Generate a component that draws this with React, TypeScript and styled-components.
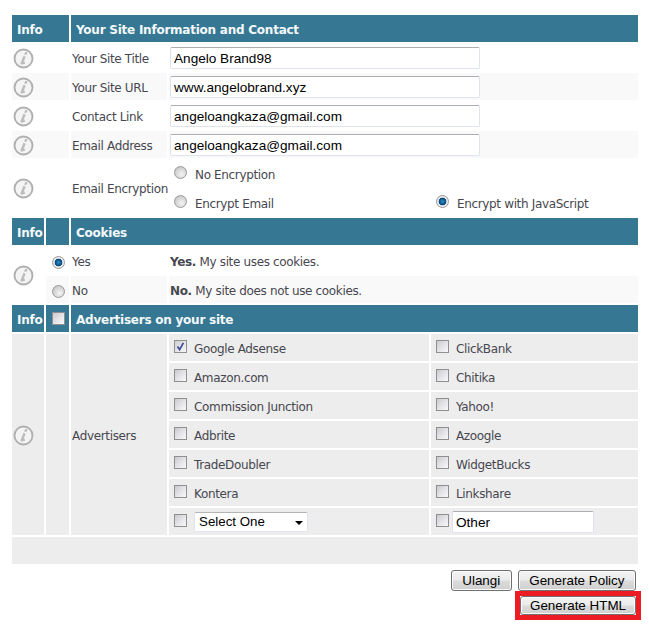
import React from "react";
import styled, { createGlobalStyle } from "styled-components";

const Global = createGlobalStyle`
  html, body { margin: 0; padding: 0; background: #fff; }
  body { font-family: "DejaVu Sans", Verdana, sans-serif; }
`;

const Page = styled.form`
  width: 649px;
  min-height: 624px;
  padding: 13px 0 0 10px;
  box-sizing: border-box;
`;

const FormTable = styled.table`
  width: 630px;
  table-layout: fixed;
  border-collapse: separate;
  border-spacing: 2px;
`;

const HeadCell = styled.th`
  box-sizing: border-box;
  height: 27px;
  padding: 3px 0 0 5px;
  background: #367893;
  color: #f4f8fa;
  font: bold 12px/24px "DejaVu Sans", Verdana, sans-serif;
  letter-spacing: -0.24px;
  text-align: left;
  white-space: nowrap;
  overflow: hidden;
`;

const HeadCheckCell = styled(HeadCell)`
  padding: 2px 0 0 6px;
  line-height: 0;
`;

const Cell = styled.td<{ $tone?: "white" | "alt" | "grey"; $pad?: number }>`
  height: 27px;
  padding: 0 0 0 ${(p) => p.$pad ?? 1}px;
  background: ${(p) => (p.$tone === "alt" ? "#f9f9f9" : p.$tone === "grey" ? "#ededed" : "#fff")};
  color: #47474f;
  font-size: 12px;
  letter-spacing: -0.35px;
  white-space: nowrap;
  vertical-align: middle;
`;

const InfoSvg = styled.svg`
  display: block;
  width: 21px;
  height: 21px;
`;

const InfoCellInner = styled.div`
  padding: 1px 0 0 0;
`;

const InfoIcon = () => (
  <InfoCellInner>
    <InfoSvg viewBox="0 0 21 21">
      <circle cx="10.5" cy="10.5" r="9" fill="#f4f4f4" stroke="#b0b0b0" strokeWidth="1.9" />
      <path d="M11.6 8.2 L8.7 15.4 L11.8 14.6" fill="none" stroke="#bdbdbd" strokeWidth="2.5" strokeLinejoin="round" />
      <path d="M12.1 3.9 L14.6 3.9 L13.6 6.8 L11.1 6.8 Z" fill="#bdbdbd" />
    </InfoSvg>
  </InfoCellInner>
);

const TextInput = styled.input<{ $width: number }>`
  display: block;
  box-sizing: border-box;
  width: ${(p) => p.$width}px;
  height: 22px;
  padding: 2px 3px 0;
  border: 1px solid #dfe3ec;
  border-top-color: #abadb3;
  border-left-color: #dfe3e9;
  border-radius: 2px;
  background: #fff;
  color: #000;
  font: 13.6px "Liberation Sans", Arial, sans-serif;
  outline: none;
`;

const Radio = styled.input.attrs({ type: "radio" })`
  appearance: none;
  display: block;
  flex: none;
  width: 13px;
  height: 13px;
  margin: 0 0 3px;
  border: 1px solid #9a9a9a;
  border-radius: 50%;
  background: radial-gradient(circle at 60% 65%, #f4f4f4, #c4c4c4 85%);
  box-sizing: border-box;
  &:checked {
    background: radial-gradient(circle at 50% 50%, #2a93c8 0, #0b4f86 38%, #0b4f86 46%, #f0f0f0 54%, #d8d8d8 100%);
  }
`;

const CookieRadio = styled(Radio)`
  margin: 4px 0 0;
`;

const Check = styled.input.attrs({ type: "checkbox" })`
  appearance: none;
  flex: none;
  display: inline-block;
  width: 13px;
  height: 13px;
  margin: 0 0 3px;
  border: 1px solid #8e8f8f;
  box-sizing: border-box;
  background: linear-gradient(135deg, #c9c9cf 0%, #e6e6ea 55%, #f8f8f8 100%);
  &:checked {
    background:
      url("data:image/svg+xml,%3Csvg xmlns='http://www.w3.org/2000/svg' viewBox='0 0 11 11'%3E%3Cpath d='M2.5 5.5 L4.6 8.6 L8.4 1.8' fill='none' stroke='%233d4d9c' stroke-width='1.7'/%3E%3C/svg%3E") center/100% no-repeat,
      linear-gradient(135deg, #cfcfd4 0%, #f8f8f8 100%);
  }
`;

const Choice = styled.label<{ $gap?: number }>`
  display: flex;
  align-items: center;
  gap: ${(p) => p.$gap ?? 7}px;
`;

const Caption = styled.span`
  display: block;
  padding-top: 2px;
`;

const Bold = styled.b`
  font-weight: bold;
`;

const SelectBox = styled.select`
  appearance: none;
  box-sizing: border-box;
  width: 114px;
  height: 20px;
  border: 1px solid #e2e3ea;
  border-top-color: #b5b5b5;
  border-radius: 2px;
  background: #fff;
  color: #000;
  padding: 0 0 0 4px;
  font: 13.3px "Liberation Sans", Arial, sans-serif;
`;

const SelectWrap = styled.span`
  position: relative;
  display: block;
  line-height: 0;
  &::after {
    content: "";
    position: absolute;
    right: 5px;
    top: 9px;
    border: 4px solid transparent;
    border-top: 4px solid #000;
    border-bottom: 0;
    pointer-events: none;
  }
`;

const Actions = styled.div`
  width: 626px;
  padding: 4px 0 0 0;
  display: flex;
  flex-direction: column;
  align-items: flex-end;
`;

const ActionRow = styled.div`
  display: flex;
  gap: 6px;
`;

const Button = styled.button`
  box-sizing: border-box;
  height: 21px;
  padding: 0 10.5px;
  border: 1px solid #707070;
  border-radius: 3px;
  background: linear-gradient(#f3f3f3 0%, #ebebeb 48%, #dcdcdc 52%, #cfcfcf 100%);
  box-shadow: inset 0 0 0 1px #fafafa;
  color: #000;
  font: 13.4px "Liberation Sans", Arial, sans-serif;
  white-space: nowrap;
`;

const HighlightFrame = styled.div`
  margin-right: -5px;
  border: 5px solid #ed1c24;
  line-height: 0;
`;

const MarkedButton = styled(Button)`
  display: block;
  width: 116px;
  height: 19px;
  padding: 0;
`;

const left = ["Google Adsense", "Amazon.com", "Commission Junction", "Adbrite", "TradeDoubler", "Kontera"];
const right = ["ClickBank", "Chitika", "Yahoo!", "Azoogle", "WidgetBucks", "Linkshare"];
const contact: [string, string][] = [
  ["Your Site Title", "Angelo Brand98"],
  ["Your Site URL", "www.angelobrand.xyz"],
  ["Contact Link", "angeloangkaza@gmail.com"],
  ["Email Address", "angeloangkaza@gmail.com"],
];

export default function App() {
  return (
    <Page onSubmit={(e) => e.preventDefault()}>
      <Global />
      <FormTable>
        <colgroup>
          <col style={{ width: 32 }} />
          <col style={{ width: 23 }} />
          <col style={{ width: 96 }} />
          <col style={{ width: 260 }} />
          <col style={{ width: 207 }} />
        </colgroup>
        <tbody>
          <tr>
            <HeadCell colSpan={2}>Info</HeadCell>
            <HeadCell colSpan={3}>Your Site Information and Contact</HeadCell>
          </tr>
          {contact.map(([label, value], i) => {
            const tone = i % 2 ? "alt" : "white";
            return (
              <tr key={label}>
                <Cell colSpan={2} $tone={tone}><InfoIcon /></Cell>
                <Cell $tone={tone}><Caption>{label}</Caption></Cell>
                <Cell colSpan={2} $tone={tone}><TextInput $width={310} defaultValue={value} /></Cell>
              </tr>
            );
          })}
          <tr>
            <Cell colSpan={2} rowSpan={2}><InfoIcon /></Cell>
            <Cell rowSpan={2}><Caption>Email Encryption</Caption></Cell>
            <Cell colSpan={2} $pad={5}><Choice $gap={8}><Radio name="enc" /><Caption>No Encryption</Caption></Choice></Cell>
          </tr>
          <tr>
            <Cell $pad={5}><Choice $gap={8}><Radio name="enc" /><Caption>Encrypt Email</Caption></Choice></Cell>
            <Cell $pad={5}><Choice $gap={8}><Radio name="enc" defaultChecked /><Caption>Encrypt with JavaScript</Caption></Choice></Cell>
          </tr>
          <tr>
            <HeadCell>Info</HeadCell>
            <HeadCell />
            <HeadCell colSpan={3}>Cookies</HeadCell>
          </tr>
          <tr>
            <Cell rowSpan={2}><InfoIcon /></Cell>
            <Cell $pad={6}><CookieRadio name="ck" defaultChecked /></Cell>
            <Cell><Caption>Yes</Caption></Cell>
            <Cell colSpan={2}><Caption><Bold>Yes.</Bold> My site uses cookies.</Caption></Cell>
          </tr>
          <tr>
            <Cell $tone="alt" $pad={6}><CookieRadio name="ck" /></Cell>
            <Cell $tone="alt"><Caption>No</Caption></Cell>
            <Cell colSpan={2} $tone="alt"><Caption><Bold>No.</Bold> My site does not use cookies.</Caption></Cell>
          </tr>
          <tr>
            <HeadCell>Info</HeadCell>
            <HeadCheckCell><Check /></HeadCheckCell>
            <HeadCell colSpan={3}>Advertisers on your site</HeadCell>
          </tr>
          {left.map((name, i) => (
            <tr key={name}>
              {i === 0 && <Cell rowSpan={7} $tone="grey"><InfoIcon /></Cell>}
              {i === 0 && <Cell rowSpan={7} $tone="grey" />}
              {i === 0 && <Cell rowSpan={7} $tone="grey"><Caption>Advertisers</Caption></Cell>}
              <Cell $tone="grey" $pad={5}><Choice><Check defaultChecked={i === 0} /><Caption>{name}</Caption></Choice></Cell>
              <Cell $tone="grey" $pad={5}><Choice><Check /><Caption>{right[i]}</Caption></Choice></Cell>
            </tr>
          ))}
          <tr>
            <Cell $tone="grey" $pad={5}>
              <Choice>
                <Check />
                <SelectWrap>
                  <SelectBox defaultValue="Select One"><option>Select One</option></SelectBox>
                </SelectWrap>
              </Choice>
            </Cell>
            <Cell $tone="grey" $pad={5}>
              <Choice $gap={3}>
                <Check />
                <TextInput $width={142} defaultValue="Other" />
              </Choice>
            </Cell>
          </tr>
          <tr>
            <Cell colSpan={5} $tone="grey" />
          </tr>
        </tbody>
      </FormTable>
      <Actions>
        <ActionRow>
          <Button type="button">Ulangi</Button>
          <Button type="button">Generate Policy</Button>
        </ActionRow>
        <HighlightFrame>
          <MarkedButton type="submit">Generate HTML</MarkedButton>
        </HighlightFrame>
      </Actions>
    </Page>
  );
}
